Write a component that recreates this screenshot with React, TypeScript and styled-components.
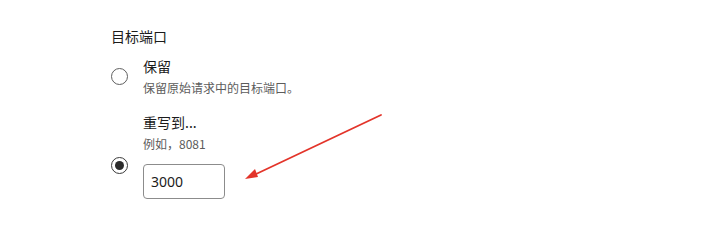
import React from "react";
import styled, { createGlobalStyle } from "styled-components";

const GlobalStyle = createGlobalStyle`
    html, body {
        margin: 0;
        padding: 0;
        background: #ffffff;
    }
    body {
        font-family: "Noto Sans CJK SC", "Noto Sans", sans-serif;
        color: #1b1b1b;
    }
`;

const Page = styled.div`
    position: relative;
    width: 714px;
    height: 230px;
    box-sizing: border-box;
    padding: 26px 0 0 111px;
    overflow: hidden;
`;

const Title = styled.div`
    font-size: 14px;
    line-height: 20px;
    color: #1b1b1b;
    margin-bottom: 10px;
`;

const Option = styled.label<{ $gap?: number }>`
    display: flex;
    align-items: center;
    margin-bottom: ${(p) => p.$gap ?? 0}px;
    cursor: pointer;
`;

const RadioCell = styled.div<{ $offset?: number }>`
    width: 32px;
    flex-shrink: 0;
    display: flex;
    align-items: center;
    margin-top: ${(p) => p.$offset ?? 0}px;
`;

const Radio = styled.span<{ $checked?: boolean }>`
    width: 15px;
    height: 15px;
    border-radius: 50%;
    border: 1px solid ${(p) => (p.$checked ? "#3a3a3a" : "#5f5f5f")};
    display: flex;
    align-items: center;
    justify-content: center;
    &::after {
        content: "";
        width: 9px;
        height: 9px;
        border-radius: 50%;
        background: #2b2b2b;
        display: ${(p) => (p.$checked ? "block" : "none")};
    }
`;

const Body = styled.div`
    display: flex;
    flex-direction: column;
`;

const Label = styled.div`
    font-size: 14px;
    line-height: 20px;
    color: #1b1b1b;
`;

const Hint = styled.div`
    font-size: 12px;
    line-height: 18px;
    color: #5c5c5c;
    margin-top: 3px;
`;

const PortInput = styled.input`
    margin-top: 11px;
    width: 82px;
    height: 35px;
    box-sizing: border-box;
    border: 1px solid #8c8c8c;
    border-radius: 4px;
    padding: 0 7px;
    font-family: "Noto Sans", "Noto Sans CJK SC", sans-serif;
    font-size: 14px;
    color: #1b1b1b;
    background: #fff;
    outline: none;
`;

const Arrow = styled.svg`
    position: absolute;
    left: 0;
    top: 0;
    pointer-events: none;
`;

const App = () => {
    return (
        <>
            <GlobalStyle />
            <Page>
                <Title>目标端口</Title>
                <Option $gap={15}>
                    <RadioCell>
                        <Radio />
                    </RadioCell>
                    <Body>
                        <Label>保留</Label>
                        <Hint>保留原始请求中的目标端口。</Hint>
                    </Body>
                </Option>
                <Option>
                    <RadioCell $offset={19}>
                        <Radio $checked />
                    </RadioCell>
                    <Body>
                        <Label>重写到...</Label>
                        <Hint>例如，8081</Hint>
                        <PortInput defaultValue="3000" />
                    </Body>
                </Option>
                <Arrow width="714" height="230" viewBox="0 0 714 230">
                    <line x1="381" y1="115" x2="254" y2="175" stroke="#e3342a" strokeWidth="1.8" strokeLinecap="round" />
                    <polygon points="245,179 255,169 258,177" fill="#e3342a" />
                </Arrow>
            </Page>
        </>
    );
};

export default App;
